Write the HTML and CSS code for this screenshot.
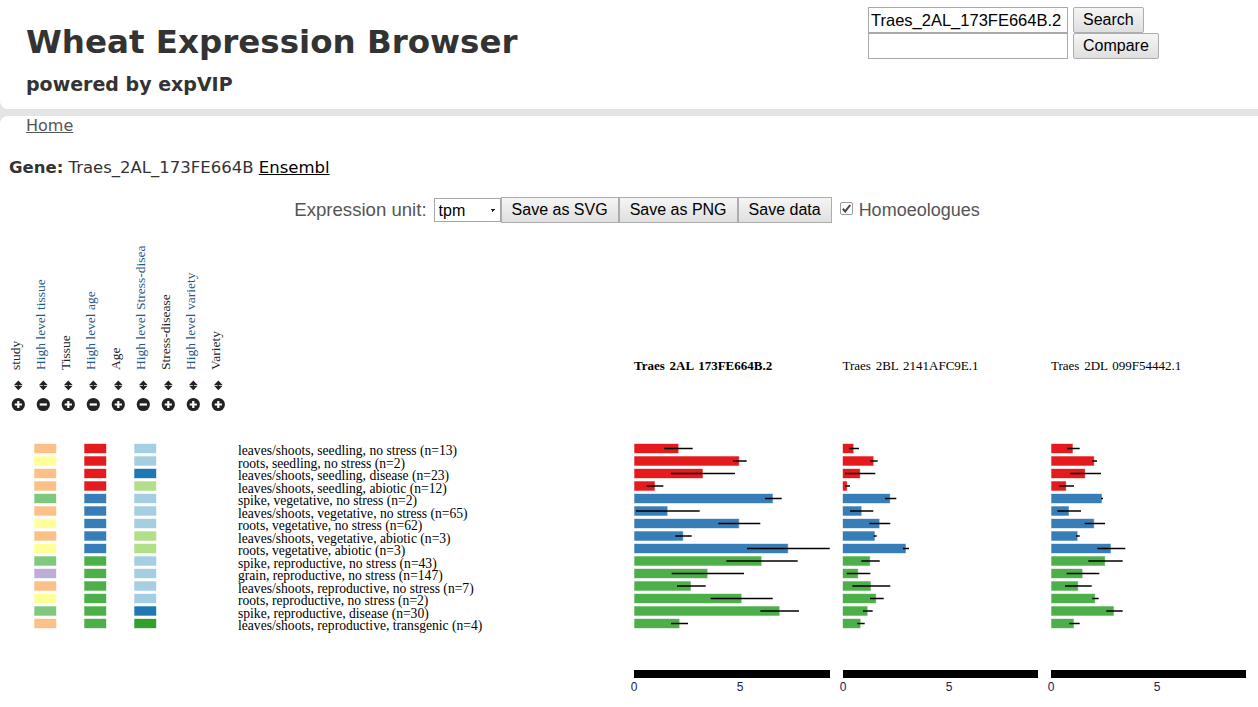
FILE: index.html
```html
<!DOCTYPE html>
<html>
<head>
<meta charset="utf-8">
<title>Wheat Expression Browser</title>
<link rel="stylesheet" href="styles.css">
</head>
<body>
<div class="shell">
  <header class="top">
    <div class="brand">
      <h1>Wheat Expression Browser</h1>
      <h2>powered by expVIP</h2>
    </div>
    <form class="search">
      <input class="field" type="text" value="Traes_2AL_173FE664B.2">
      <button class="btn" type="button">Search</button>
      <input class="field" type="text" value="">
      <button class="btn" type="button">Compare</button>
    </form>
  </header>
  <main class="content">
    <nav class="nav"><a href="#">Home</a></nav>
    <p class="gene"><b>Gene:</b> Traes_2AL_173FE664B <a href="#">Ensembl</a></p>
    <div class="controls">
      <span class="unit-label">Expression unit:</span>
      <select class="unit"><option>tpm</option></select>
      <button class="btn tool" type="button">Save as SVG</button>
      <button class="btn tool" type="button">Save as PNG</button>
      <button class="btn tool" type="button">Save data</button>
      <svg class="check" width="13" height="13" viewBox="0 0 13 13"><rect x="0.5" y="0.5" width="12" height="12" rx="1.5" class="check-box"/><path d="M2.8 6.8 L5.2 9.4 L10.2 3" class="check-mark"/></svg>
      <span class="homo">Homoeologues</span>
    </div>
    <svg class="chart" width="1258" height="472" viewBox="0 235 1258 472">
      <g class="heads">
        <text class="vl" transform="translate(20,370) rotate(-90)">study</text>
        <text class="vl hl" transform="translate(45,370) rotate(-90)">High level tissue</text>
        <text class="vl" transform="translate(70,370) rotate(-90)">Tissue</text>
        <text class="vl hl" transform="translate(95,370) rotate(-90)">High level age</text>
        <text class="vl" transform="translate(120,370) rotate(-90)">Age</text>
        <text class="vl hl" transform="translate(145,370) rotate(-90)">High level Stress-disea</text>
        <text class="vl" transform="translate(170,370) rotate(-90)">Stress-disease</text>
        <text class="vl hl" transform="translate(195,370) rotate(-90)">High level variety</text>
        <text class="vl" transform="translate(220,370) rotate(-90)">Variety</text>
      </g>
      <g class="sorters">
        <g transform="translate(18.3,0)"><path class="arrow" d="M-2.8 384.4 L0 381.4 L2.8 384.4 Z M-2.8 386.4 L0 389.4 L2.8 386.4 Z M0 383 V388"/><circle class="ico" cx="0" cy="404.5" r="6.6"/><path class="ico-line" d="M-3.6 404.5 H3.6 M0 400.9 V408.1"/></g>
        <g transform="translate(43.3,0)"><path class="arrow" d="M-2.8 384.4 L0 381.4 L2.8 384.4 Z M-2.8 386.4 L0 389.4 L2.8 386.4 Z M0 383 V388"/><circle class="ico" cx="0" cy="404.5" r="6.6"/><path class="ico-line" d="M-3.6 404.5 H3.6"/></g>
        <g transform="translate(68.3,0)"><path class="arrow" d="M-2.8 384.4 L0 381.4 L2.8 384.4 Z M-2.8 386.4 L0 389.4 L2.8 386.4 Z M0 383 V388"/><circle class="ico" cx="0" cy="404.5" r="6.6"/><path class="ico-line" d="M-3.6 404.5 H3.6 M0 400.9 V408.1"/></g>
        <g transform="translate(93.3,0)"><path class="arrow" d="M-2.8 384.4 L0 381.4 L2.8 384.4 Z M-2.8 386.4 L0 389.4 L2.8 386.4 Z M0 383 V388"/><circle class="ico" cx="0" cy="404.5" r="6.6"/><path class="ico-line" d="M-3.6 404.5 H3.6"/></g>
        <g transform="translate(118.3,0)"><path class="arrow" d="M-2.8 384.4 L0 381.4 L2.8 384.4 Z M-2.8 386.4 L0 389.4 L2.8 386.4 Z M0 383 V388"/><circle class="ico" cx="0" cy="404.5" r="6.6"/><path class="ico-line" d="M-3.6 404.5 H3.6 M0 400.9 V408.1"/></g>
        <g transform="translate(143.3,0)"><path class="arrow" d="M-2.8 384.4 L0 381.4 L2.8 384.4 Z M-2.8 386.4 L0 389.4 L2.8 386.4 Z M0 383 V388"/><circle class="ico" cx="0" cy="404.5" r="6.6"/><path class="ico-line" d="M-3.6 404.5 H3.6"/></g>
        <g transform="translate(168.3,0)"><path class="arrow" d="M-2.8 384.4 L0 381.4 L2.8 384.4 Z M-2.8 386.4 L0 389.4 L2.8 386.4 Z M0 383 V388"/><circle class="ico" cx="0" cy="404.5" r="6.6"/><path class="ico-line" d="M-3.6 404.5 H3.6 M0 400.9 V408.1"/></g>
        <g transform="translate(193.3,0)"><path class="arrow" d="M-2.8 384.4 L0 381.4 L2.8 384.4 Z M-2.8 386.4 L0 389.4 L2.8 386.4 Z M0 383 V388"/><circle class="ico" cx="0" cy="404.5" r="6.6"/><path class="ico-line" d="M-3.6 404.5 H3.6 M0 400.9 V408.1"/></g>
        <g transform="translate(218.3,0)"><path class="arrow" d="M-2.8 384.4 L0 381.4 L2.8 384.4 Z M-2.8 386.4 L0 389.4 L2.8 386.4 Z M0 383 V388"/><circle class="ico" cx="0" cy="404.5" r="6.6"/><path class="ico-line" d="M-3.6 404.5 H3.6 M0 400.9 V408.1"/></g>
      </g>
      <g class="titles">
        <text class="gt gt-main" x="634" y="370">Traes 2AL 173FE664B.2</text>
        <text class="gt" x="842.5" y="370">Traes 2BL 2141AFC9E.1</text>
        <text class="gt" x="1051" y="370">Traes 2DL 099F54442.1</text>
      </g>
      <g class="rows">
        <g transform="translate(0,0)">
          <rect class="sw c-or" x="34.5" y="444" width="21.5" height="9"/><rect class="sw c-red" x="84.5" y="444" width="21.5" height="9"/><rect class="sw c-lb" x="134.5" y="444" width="21.5" height="9"/>
          <text class="rl" x="238" y="455">leaves/shoots, seedling, no stress (n=13)</text>
          <rect class="bar c-red" x="634.5" y="444" width="43.7" height="9"/><line class="err" x1="664" x2="692.7" y1="448.5" y2="448.5"/>
          <rect class="bar c-red" x="843" y="444" width="10.2" height="9"/><line class="err" x1="849.3" x2="859" y1="448.5" y2="448.5"/>
          <rect class="bar c-red" x="1051.5" y="444" width="21" height="9"/><line class="err" x1="1067.3" x2="1079.7" y1="448.5" y2="448.5"/>
        </g>
        <g transform="translate(0,12.5)">
          <rect class="sw c-ye" x="34.5" y="444" width="21.5" height="9"/><rect class="sw c-red" x="84.5" y="444" width="21.5" height="9"/><rect class="sw c-lb" x="134.5" y="444" width="21.5" height="9"/>
          <text class="rl" x="238" y="455">roots, seedling, no stress (n=2)</text>
          <rect class="bar c-red" x="634.5" y="444" width="104.3" height="9"/><line class="err" x1="733" x2="746.7" y1="448.5" y2="448.5"/>
          <rect class="bar c-red" x="843" y="444" width="30.2" height="9"/><line class="err" x1="870.3" x2="877.7" y1="448.5" y2="448.5"/>
          <rect class="bar c-red" x="1051.5" y="444" width="42.3" height="9"/><line class="err" x1="1092.3" x2="1097" y1="448.5" y2="448.5"/>
        </g>
        <g transform="translate(0,25)">
          <rect class="sw c-or" x="34.5" y="444" width="21.5" height="9"/><rect class="sw c-red" x="84.5" y="444" width="21.5" height="9"/><rect class="sw c-db" x="134.5" y="444" width="21.5" height="9"/>
          <text class="rl" x="238" y="455">leaves/shoots, seedling, disease (n=23)</text>
          <rect class="bar c-red" x="634.5" y="444" width="68" height="9"/><line class="err" x1="671" x2="735" y1="448.5" y2="448.5"/>
          <rect class="bar c-red" x="843" y="444" width="16.8" height="9"/><line class="err" x1="845" x2="875.3" y1="448.5" y2="448.5"/>
          <rect class="bar c-red" x="1051.5" y="444" width="33.3" height="9"/><line class="err" x1="1070" x2="1101" y1="448.5" y2="448.5"/>
        </g>
        <g transform="translate(0,37.5)">
          <rect class="sw c-or" x="34.5" y="444" width="21.5" height="9"/><rect class="sw c-red" x="84.5" y="444" width="21.5" height="9"/><rect class="sw c-lg" x="134.5" y="444" width="21.5" height="9"/>
          <text class="rl" x="238" y="455">leaves/shoots, seedling, abiotic (n=12)</text>
          <rect class="bar c-red" x="634.5" y="444" width="20" height="9"/><line class="err" x1="646.7" x2="663.3" y1="448.5" y2="448.5"/>
          <rect class="bar c-red" x="843" y="444" width="3.8" height="9"/><line class="err" x1="845" x2="850" y1="448.5" y2="448.5"/>
          <rect class="bar c-red" x="1051.5" y="444" width="14.3" height="9"/><line class="err" x1="1059.3" x2="1074" y1="448.5" y2="448.5"/>
        </g>
        <g transform="translate(0,50)">
          <rect class="sw c-gr" x="34.5" y="444" width="21.5" height="9"/><rect class="sw c-blu" x="84.5" y="444" width="21.5" height="9"/><rect class="sw c-lb" x="134.5" y="444" width="21.5" height="9"/>
          <text class="rl" x="238" y="455">spike, vegetative, no stress (n=2)</text>
          <rect class="bar c-blu" x="634.5" y="444" width="138" height="9"/><line class="err" x1="765" x2="781.7" y1="448.5" y2="448.5"/>
          <rect class="bar c-blu" x="843" y="444" width="46.8" height="9"/><line class="err" x1="885" x2="896.3" y1="448.5" y2="448.5"/>
          <rect class="bar c-blu" x="1051.5" y="444" width="50" height="9"/><line class="err" x1="1101" x2="1103" y1="448.5" y2="448.5"/>
        </g>
        <g transform="translate(0,62.5)">
          <rect class="sw c-or" x="34.5" y="444" width="21.5" height="9"/><rect class="sw c-blu" x="84.5" y="444" width="21.5" height="9"/><rect class="sw c-lb" x="134.5" y="444" width="21.5" height="9"/>
          <text class="rl" x="238" y="455">leaves/shoots, vegetative, no stress (n=65)</text>
          <rect class="bar c-blu" x="634.5" y="444" width="32.7" height="9"/><line class="err" x1="636" x2="699.7" y1="448.5" y2="448.5"/>
          <rect class="bar c-blu" x="843" y="444" width="18.2" height="9"/><line class="err" x1="850" x2="873.3" y1="448.5" y2="448.5"/>
          <rect class="bar c-blu" x="1051.5" y="444" width="17" height="9"/><line class="err" x1="1057.3" x2="1081" y1="448.5" y2="448.5"/>
        </g>
        <g transform="translate(0,75)">
          <rect class="sw c-ye" x="34.5" y="444" width="21.5" height="9"/><rect class="sw c-blu" x="84.5" y="444" width="21.5" height="9"/><rect class="sw c-lb" x="134.5" y="444" width="21.5" height="9"/>
          <text class="rl" x="238" y="455">roots, vegetative, no stress (n=62)</text>
          <rect class="bar c-blu" x="634.5" y="444" width="104.3" height="9"/><line class="err" x1="718.3" x2="760.3" y1="448.5" y2="448.5"/>
          <rect class="bar c-blu" x="843" y="444" width="36.2" height="9"/><line class="err" x1="869.3" x2="890.3" y1="448.5" y2="448.5"/>
          <rect class="bar c-blu" x="1051.5" y="444" width="42.3" height="9"/><line class="err" x1="1084.7" x2="1105" y1="448.5" y2="448.5"/>
        </g>
        <g transform="translate(0,87.5)">
          <rect class="sw c-or" x="34.5" y="444" width="21.5" height="9"/><rect class="sw c-blu" x="84.5" y="444" width="21.5" height="9"/><rect class="sw c-lg" x="134.5" y="444" width="21.5" height="9"/>
          <text class="rl" x="238" y="455">leaves/shoots, vegetative, abiotic (n=3)</text>
          <rect class="bar c-blu" x="634.5" y="444" width="48.3" height="9"/><line class="err" x1="675.3" x2="691.7" y1="448.5" y2="448.5"/>
          <rect class="bar c-blu" x="843" y="444" width="31.5" height="9"/><line class="err" x1="873.7" x2="876.7" y1="448.5" y2="448.5"/>
          <rect class="bar c-blu" x="1051.5" y="444" width="25.7" height="9"/><line class="err" x1="1076" x2="1079.7" y1="448.5" y2="448.5"/>
        </g>
        <g transform="translate(0,100)">
          <rect class="sw c-ye" x="34.5" y="444" width="21.5" height="9"/><rect class="sw c-blu" x="84.5" y="444" width="21.5" height="9"/><rect class="sw c-lg" x="134.5" y="444" width="21.5" height="9"/>
          <text class="rl" x="238" y="455">roots, vegetative, abiotic (n=3)</text>
          <rect class="bar c-blu" x="634.5" y="444" width="153.3" height="9"/><line class="err" x1="747" x2="829.7" y1="448.5" y2="448.5"/>
          <rect class="bar c-blu" x="843" y="444" width="62.5" height="9"/><line class="err" x1="903" x2="909" y1="448.5" y2="448.5"/>
          <rect class="bar c-blu" x="1051.5" y="444" width="59" height="9"/><line class="err" x1="1097.3" x2="1125.3" y1="448.5" y2="448.5"/>
        </g>
        <g transform="translate(0,112.5)">
          <rect class="sw c-gr" x="34.5" y="444" width="21.5" height="9"/><rect class="sw c-grn" x="84.5" y="444" width="21.5" height="9"/><rect class="sw c-lb" x="134.5" y="444" width="21.5" height="9"/>
          <text class="rl" x="238" y="455">spike, reproductive, no stress (n=43)</text>
          <rect class="bar c-grn" x="634.5" y="444" width="126.7" height="9"/><line class="err" x1="726.3" x2="797.7" y1="448.5" y2="448.5"/>
          <rect class="bar c-grn" x="843" y="444" width="26.8" height="9"/><line class="err" x1="861.3" x2="879.7" y1="448.5" y2="448.5"/>
          <rect class="bar c-grn" x="1051.5" y="444" width="53.3" height="9"/><line class="err" x1="1088.3" x2="1122.7" y1="448.5" y2="448.5"/>
        </g>
        <g transform="translate(0,125)">
          <rect class="sw c-pu" x="34.5" y="444" width="21.5" height="9"/><rect class="sw c-grn" x="84.5" y="444" width="21.5" height="9"/><rect class="sw c-lb" x="134.5" y="444" width="21.5" height="9"/>
          <text class="rl" x="238" y="455">grain, reproductive, no stress (n=147)</text>
          <rect class="bar c-grn" x="634.5" y="444" width="72.7" height="9"/><line class="err" x1="671.7" x2="744" y1="448.5" y2="448.5"/>
          <rect class="bar c-grn" x="843" y="444" width="14.8" height="9"/><line class="err" x1="846.7" x2="870.3" y1="448.5" y2="448.5"/>
          <rect class="bar c-grn" x="1051.5" y="444" width="30.7" height="9"/><line class="err" x1="1066.7" x2="1099.3" y1="448.5" y2="448.5"/>
        </g>
        <g transform="translate(0,137.5)">
          <rect class="sw c-or" x="34.5" y="444" width="21.5" height="9"/><rect class="sw c-grn" x="84.5" y="444" width="21.5" height="9"/><rect class="sw c-lb" x="134.5" y="444" width="21.5" height="9"/>
          <text class="rl" x="238" y="455">leaves/shoots, reproductive, no stress (n=7)</text>
          <rect class="bar c-grn" x="634.5" y="444" width="56" height="9"/><line class="err" x1="677" x2="705.7" y1="448.5" y2="448.5"/>
          <rect class="bar c-grn" x="843" y="444" width="27.5" height="9"/><line class="err" x1="852.3" x2="890.3" y1="448.5" y2="448.5"/>
          <rect class="bar c-grn" x="1051.5" y="444" width="26.3" height="9"/><line class="err" x1="1065" x2="1091.7" y1="448.5" y2="448.5"/>
        </g>
        <g transform="translate(0,150)">
          <rect class="sw c-ye" x="34.5" y="444" width="21.5" height="9"/><rect class="sw c-grn" x="84.5" y="444" width="21.5" height="9"/><rect class="sw c-lb" x="134.5" y="444" width="21.5" height="9"/>
          <text class="rl" x="238" y="455">roots, reproductive, no stress (n=2)</text>
          <rect class="bar c-grn" x="634.5" y="444" width="106.7" height="9"/><line class="err" x1="710.7" x2="772.7" y1="448.5" y2="448.5"/>
          <rect class="bar c-grn" x="843" y="444" width="32.8" height="9"/><line class="err" x1="870" x2="883.7" y1="448.5" y2="448.5"/>
          <rect class="bar c-grn" x="1051.5" y="444" width="43.3" height="9"/><line class="err" x1="1092.3" x2="1098.7" y1="448.5" y2="448.5"/>
        </g>
        <g transform="translate(0,162.5)">
          <rect class="sw c-gr" x="34.5" y="444" width="21.5" height="9"/><rect class="sw c-grn" x="84.5" y="444" width="21.5" height="9"/><rect class="sw c-db" x="134.5" y="444" width="21.5" height="9"/>
          <text class="rl" x="238" y="455">spike, reproductive, disease (n=30)</text>
          <rect class="bar c-grn" x="634.5" y="444" width="144.7" height="9"/><line class="err" x1="760.3" x2="799" y1="448.5" y2="448.5"/>
          <rect class="bar c-grn" x="843" y="444" width="24.2" height="9"/><line class="err" x1="863" x2="872.7" y1="448.5" y2="448.5"/>
          <rect class="bar c-grn" x="1051.5" y="444" width="62" height="9"/><line class="err" x1="1106.3" x2="1122.7" y1="448.5" y2="448.5"/>
        </g>
        <g transform="translate(0,175)">
          <rect class="sw c-or" x="34.5" y="444" width="21.5" height="9"/><rect class="sw c-grn" x="84.5" y="444" width="21.5" height="9"/><rect class="sw c-dg" x="134.5" y="444" width="21.5" height="9"/>
          <text class="rl" x="238" y="455">leaves/shoots, reproductive, transgenic (n=4)</text>
          <rect class="bar c-grn" x="634.5" y="444" width="44.7" height="9"/><line class="err" x1="671" x2="688" y1="448.5" y2="448.5"/>
          <rect class="bar c-grn" x="843" y="444" width="17.2" height="9"/><line class="err" x1="857.3" x2="864.7" y1="448.5" y2="448.5"/>
          <rect class="bar c-grn" x="1051.5" y="444" width="22" height="9"/><line class="err" x1="1069.3" x2="1079.7" y1="448.5" y2="448.5"/>
        </g>
      </g>
      <g class="axes">
        <rect class="axis" x="634" y="670" width="196" height="8"/>
        <rect class="axis" x="843" y="670" width="195" height="8"/>
        <rect class="axis" x="1051" y="670" width="195" height="8"/>
        <text class="tick" x="634" y="691">0</text><text class="tick" x="740" y="691">5</text>
        <text class="tick" x="843" y="691">0</text><text class="tick" x="949" y="691">5</text>
        <text class="tick" x="1051" y="691">0</text><text class="tick" x="1157" y="691">5</text>
      </g>
    </svg>
  </main>
</div>
</body>
</html>
```
FILE: styles.css
```css
html, body {
  margin: 0;
  padding: 0;
}
body {
  font-family: "DejaVu Sans", Verdana, sans-serif;
  color: #333;
  background: #fff;
  overflow: hidden;
}
.shell {
  background: #e4e4e4;
}
.top {
  display: grid;
  grid-template-columns: 842px auto;
  padding-left: 26px;
  height: 109px;
  background: #fff;
  border-bottom-left-radius: 8px;
  margin-bottom: 7px;
}
.brand h1 {
  margin: 22px 0 0;
  font-size: 32.5px;
  line-height: 40px;
  font-weight: bold;
  color: #333;
}
.brand h2 {
  margin: 10px 0 0;
  font-size: 19px;
  line-height: 24px;
  font-weight: bold;
  color: #333;
}
.search {
  display: grid;
  grid-template-columns: 200px auto;
  grid-template-rows: 26px 26px;
  column-gap: 5px;
  align-content: start;
  justify-items: start;
  margin: 7px 0 0;
}
.field {
  box-sizing: border-box;
  width: 200px;
  height: 26px;
  margin: 0;
  border: 1px solid #a9a9a9;
  padding: 0 2px;
  font-family: "Liberation Sans", Arial, sans-serif;
  font-size: 16.5px;
  color: #000;
  background: #fff;
  outline: none;
}
.btn {
  box-sizing: border-box;
  height: 26px;
  margin: 0;
  padding: 0 9px;
  border: 1px solid #adadad;
  border-radius: 2px;
  background: linear-gradient(#f5f5f5, #dfdfdf);
  font-family: "Liberation Sans", Arial, sans-serif;
  font-size: 16px;
  color: #000;
}
.content {
  background: #fff;
  border-top-left-radius: 8px;
  height: 591px;
}
.nav {
  height: 20px;
  line-height: 20px;
  padding-left: 26px;
  font-size: 16px;
}
.nav a {
  color: #555;
}
.gene {
  margin: 22px 0 0;
  padding-left: 9px;
  height: 20px;
  line-height: 20px;
  font-size: 16.5px;
  color: #333;
}
.gene a {
  color: #000;
}
.controls {
  margin-top: 19px;
  height: 26px;
  display: flex;
  justify-content: center;
  align-items: center;
  padding-left: 16px;
  font-family: "Liberation Sans", Arial, sans-serif;
}
.unit-label {
  font-size: 18.6px;
  color: #555;
  margin-right: 7px;
}
.unit {
  box-sizing: border-box;
  width: 67px;
  height: 24px;
  margin: 0;
  padding: 0 0 0 4px;
  border: 1px solid #a6a6a6;
  border-radius: 0;
  appearance: none;
  -webkit-appearance: none;
  background-color: #fff;
  background-image: linear-gradient(45deg, transparent 50%, #222 50%), linear-gradient(135deg, #222 50%, transparent 50%);
  background-position: 55px 10px, 58px 10px;
  background-size: 3px 3px, 3px 3px;
  background-repeat: no-repeat;
  font-family: "Liberation Sans", Arial, sans-serif;
  font-size: 16px;
  color: #000;
}
.tool {
  border-radius: 0;
  padding: 0 10px;
}
.check {
  display: block;
  margin-left: 8px;
  margin-top: -4px;
}
.check-box {
  fill: #fff;
  stroke: #9a9a9a;
}
.check-mark {
  fill: none;
  stroke: #444;
  stroke-width: 2;
}
.homo {
  font-size: 18px;
  color: #555;
  margin-left: 6px;
}
.chart {
  display: block;
  margin-top: 12px;
}
.vl {
  font-family: "Liberation Serif", serif;
  font-size: 13.5px;
  fill: #222;
}
.vl.hl {
  fill: #1f5a8c;
}
.arrow {
  fill: #222;
  stroke: #222;
  stroke-width: 1.3;
}
.ico {
  fill: #222;
}
.ico-line {
  stroke: #fff;
  stroke-width: 2.2;
}
.gt {
  font-family: "Liberation Serif", serif;
  font-size: 13px;
  word-spacing: 1.5px;
  fill: #000;
}
.gt-main {
  font-weight: bold;
}
.rl {
  font-family: "Liberation Serif", serif;
  font-size: 13.6px;
  fill: #000;
}
.sw, .bar {
  stroke-width: 1;
  stroke-opacity: 0.4;
}
.err {
  stroke: #000;
  stroke-width: 1.5;
}
.axis {
  fill: #000;
}
.tick {
  font-family: "Liberation Sans", Arial, sans-serif;
  font-size: 12px;
  fill: #1a1a50;
  text-anchor: middle;
}
.c-or { fill: #fdc086; stroke: #fdc086; }
.c-ye { fill: #ffff99; stroke: #ffff99; }
.c-gr { fill: #7fc97f; stroke: #7fc97f; }
.c-pu { fill: #beaed4; stroke: #beaed4; }
.c-red { fill: #e41a1c; stroke: #e41a1c; }
.c-blu { fill: #377eb8; stroke: #377eb8; }
.c-grn { fill: #4daf4a; stroke: #4daf4a; }
.c-lb { fill: #a6cee3; stroke: #a6cee3; }
.c-db { fill: #1f78b4; stroke: #1f78b4; }
.c-lg { fill: #b2df8a; stroke: #b2df8a; }
.c-dg { fill: #33a02c; stroke: #33a02c; }
```
